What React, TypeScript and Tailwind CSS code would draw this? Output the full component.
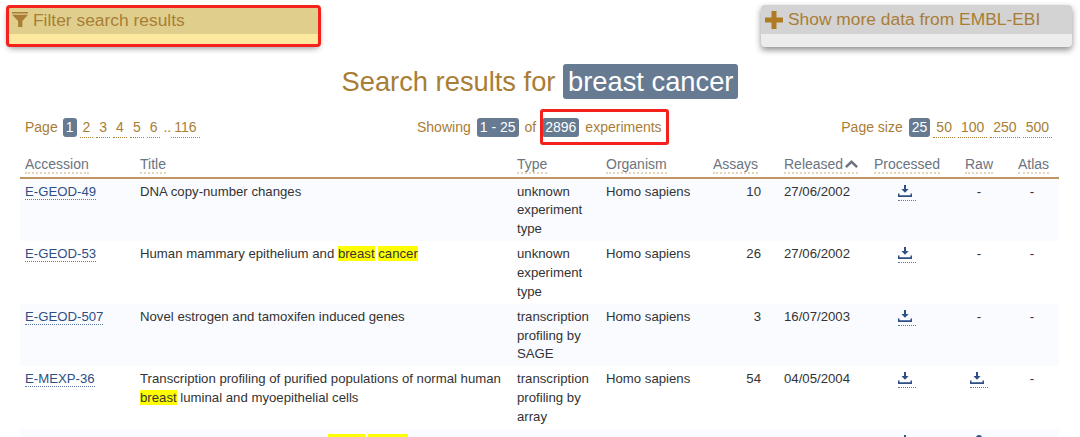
import type { ReactNode } from 'react';

const brown = 'text-[#a97d36]';

function Chip({ children, className = '' }: { children: ReactNode; className?: string }) {
  return <span className={`rounded-[3px] bg-[#667a92] text-white ${className}`}>{children}</span>;
}

function PageLink({ children }: { children: ReactNode }) {
  return <span className="border-b border-dotted border-[#a97d36] px-[3px]">{children}</span>;
}

function Hl({ children }: { children: ReactNode }) {
  return <span className="bg-[#ffff00]">{children}</span>;
}

function DownloadIcon() {
  return (
    <span className="inline-block border-b border-dotted border-[#5f7aa8] pb-[3px] pr-[4px] align-top leading-none">
      <svg className="block h-[12px] w-[14px]" viewBox="0 0 14 12" fill="#2e4f86">
        <path d="M6 0h2v4h2.6L7 7.8 3.4 4H6z" />
        <path d="M0 8.5h1.5v1.8h11V8.5H14V12H0z" />
      </svg>
    </span>
  );
}

function Th({ children, align = 'text-left', className = '' }: { children: ReactNode; align?: string; className?: string }) {
  return (
    <th className={`pb-[3px] pl-[5px] pr-[5px] pt-0 font-normal text-[#6b7480] ${align} ${className}`}>
      <span className="border-b-2 border-dotted border-[#e3d6bd]">{children}</span>
    </th>
  );
}

type Row = {
  id: string;
  title: ReactNode;
  type: ReactNode;
  assays: number;
  date: string;
  raw?: boolean;
};

const rows: Row[] = [
  { id: 'E-GEOD-49', title: 'DNA copy-number changes', type: 'unknown experiment type', assays: 10, date: '27/06/2002' },
  {
    id: 'E-GEOD-53',
    title: <>Human mammary epithelium and <Hl>breast</Hl> <Hl>cancer</Hl></>,
    type: 'unknown experiment type',
    assays: 26,
    date: '27/06/2002',
  },
  { id: 'E-GEOD-507', title: 'Novel estrogen and tamoxifen induced genes', type: 'transcription profiling by SAGE', assays: 3, date: '16/07/2003' },
  {
    id: 'E-MEXP-36',
    title: <>Transcription profiling of purified populations of normal human <Hl>breast</Hl> luminal and myoepithelial cells</>,
    type: 'transcription profiling by array',
    assays: 54,
    date: '04/05/2004',
    raw: true,
  },
  {
    id: 'E-MEXP-42',
    title: <>Transcription profiling of human <Hl>breast</Hl> <Hl>cancer</Hl></>,
    type: 'transcription profiling by array',
    assays: 30,
    date: '04/05/2004',
    raw: true,
  },
];

export default function App() {
  return (
    <div className="h-[437px] w-[1080px] overflow-hidden bg-white font-['Liberation_Sans',Arial,sans-serif] text-[14px] leading-[19px] text-[#333]">
      {/* Top panels */}
      <div className="flex items-start justify-between pl-[8px] pr-[8px] pt-[5px]">
        <div className="relative mt-[2px] h-[38px] w-[311px] rounded-[4px] bg-[#fee89f] shadow-[0_3px_6px_rgba(0,0,0,0.45)]">
          <div className={`flex h-[27px] items-center gap-[5px] rounded-t-[4px] bg-[#e0cf8c] pl-[4px] text-[17.4px] ${brown}`}>
            <svg className="mb-[2px] h-[15px] w-[16px]" viewBox="0 0 17 16" fill="#a97d36">
              <path d="M0 0h17v1.6H0zM0 3h17l-6 6.6V16H6.5V9.6z" />
            </svg>
            Filter search results
          </div>
          <div className="absolute -inset-[2px] rounded-[4px] border-[3px] border-[#f5211c]" />
        </div>
        <div className="h-[41.5px] w-[311px] rounded-[4px] bg-[#ececec] shadow-[0_3px_6px_rgba(0,0,0,0.45)]">
          <div className={`flex h-[29px] items-center gap-[5px] rounded-t-[4px] bg-[#d3d3d3] pl-[4px] text-[17.4px] ${brown}`}>
            <svg className="h-[18px] w-[18px]" viewBox="0 0 18 18" fill="#b07a22">
              <path d="M6.5 0h5v6.5H18v5h-6.5V18h-5v-6.5H0v-5h6.5z" />
            </svg>
            Show more data from EMBL-EBI
          </div>
        </div>
      </div>

      {/* Heading */}
      <h1 className={`mt-[19px] text-center text-[27.3px] font-normal leading-[32px] ${brown}`}>
        Search results for <Chip className="px-[5px] py-[2px]">breast cancer</Chip>
      </h1>

      {/* Pager row */}
      <div className={`relative mt-[20px] flex items-center justify-between pl-[25px] pr-[28px] ${brown}`}>
        <div className="flex items-center gap-[3px]">
          <span className="mr-[2px]">Page</span>
          <Chip className="px-[3px]">1</Chip>
          <PageLink>2</PageLink>
          <PageLink>3</PageLink>
          <PageLink>4</PageLink>
          <PageLink>5</PageLink>
          <PageLink>6</PageLink>
          <span className="-mr-[3px]">..</span>
          <PageLink>116</PageLink>
        </div>
        <div className="absolute left-[417px] top-0 flex items-center">
          Showing <Chip className="mx-[6px] px-[3px]">1 - 25</Chip> of <Chip className="mx-[6px] px-[3px]">2896</Chip> experiments
          <div className="absolute -top-[9px] bottom-[-8px] left-[123px] w-[129px] rounded-[3px] border-[3px] border-[#f5211c]" />
        </div>
        <div className="flex items-center gap-[3px]">
          <span className="mr-[3px]">Page size</span>
          <Chip className="px-[3px]">25</Chip>
          <PageLink>50</PageLink>
          <PageLink>100</PageLink>
          <PageLink>250</PageLink>
          <PageLink>500</PageLink>
        </div>
      </div>

      {/* Results table */}
      <table className="ml-[20px] mt-[17px] w-[1039px] table-fixed border-collapse">
        <colgroup>
          <col className="w-[115px]" />
          <col className="w-[377px]" />
          <col className="w-[89px]" />
          <col className="w-[106px]" />
          <col className="w-[72px]" />
          <col className="w-[90px]" />
          <col className="w-[76px]" />
          <col className="w-[68px]" />
          <col className="w-[46px]" />
        </colgroup>
        <thead>
          <tr className="border-b-2 border-[#bd975f]">
            <Th>Accession</Th>
            <Th>Title</Th>
            <Th>Type</Th>
            <Th>Organism</Th>
            <Th align="text-right" className="pr-[21px]">Assays</Th>
            <Th>
              Released
              <svg className="ml-[2px] inline-block h-[8px] w-[13px] align-[1px]" viewBox="0 0 13 8" fill="#6b7480">
                <path d="M6.5 0 13 6.2 11.2 8 6.5 3.5 1.8 8 0 6.2z" />
              </svg>
            </Th>
            <Th align="text-center">Processed</Th>
            <Th align="text-center">Raw</Th>
            <Th align="text-center" className="pl-[3px] pr-[11px]">Atlas</Th>
          </tr>
        </thead>
        <tbody className="text-[13.2px] leading-[18.86px]">
          {rows.map((row, i) => (
            <tr key={row.id} className="even:bg-white odd:bg-[#f9fbff]">
              <td className="px-[5px] pb-[2px] pt-[4px] align-top">
                <span className="border-b border-dotted border-[#5f7aa8] text-[#2e4f86]">{row.id}</span>
              </td>
              <td className="px-[5px] pb-[2px] pt-[4px] align-top">{row.title}</td>
              <td className="px-[5px] pb-[2px] pt-[4px] align-top">{row.type}</td>
              <td className="px-[5px] pb-[2px] pt-[4px] align-top">Homo sapiens</td>
              <td className="pb-[2px] pl-[5px] pr-[18px] pt-[4px] text-right align-top">{row.assays}</td>
              <td className="px-[5px] pb-[2px] pt-[4px] align-top">{row.date}</td>
              <td className="px-[5px] pb-[3px] pt-[6px] text-center align-top"><DownloadIcon /></td>
              <td className={`px-[5px] pb-[2px] text-center align-top ${row.raw ? 'pt-[6px]' : 'pt-[4px]'}`}>
                {row.raw && i === 4 ? (
                  <svg className="mx-auto block h-[12px] w-[14px]" viewBox="0 0 14 12" fill="#2e4f86">
                    <path d="M4 3a3 3 0 0 1 6 0c0 1.5-2 2-2 4H6c0-2 2-2.500 2-4a1 1 0 0 0-2 0z" />
                  </svg>
                ) : row.raw ? <DownloadIcon /> : '-'}
              </td>
              <td className="pb-[2px] pl-[3px] pr-[11px] pt-[4px] text-center align-top">-</td>
            </tr>
          ))}
        </tbody>
      </table>
    </div>
  );
}
